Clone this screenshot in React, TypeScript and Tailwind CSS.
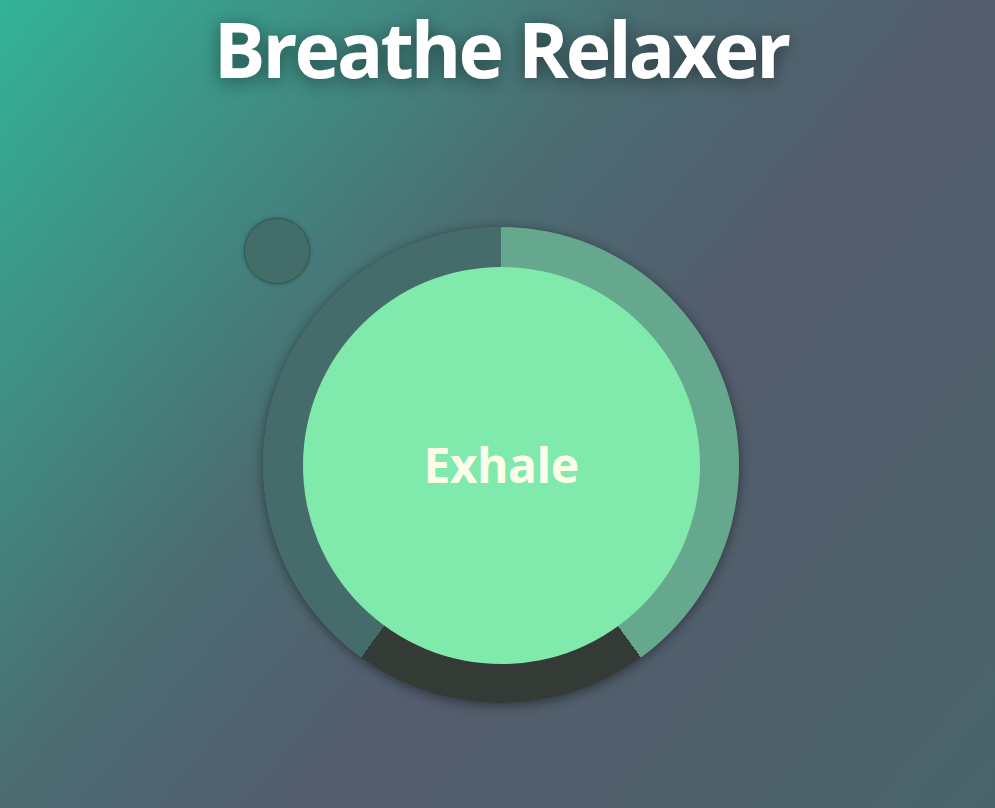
import React from 'react';

const App: React.FC = () => {
  return (
    <div className="min-h-screen w-full overflow-hidden bg-[linear-gradient(130deg,#32b398_0%,#4b6c72_40%,#545c6d_60%,#4a656a_100%)] font-['Open_Sans',sans-serif] text-white">
      <main className="flex flex-col items-center pl-[7px]">
        {/* Title */}
        <h1 className="pt-[4px] text-[77px] font-bold leading-[90px] tracking-[-3px] [text-shadow:0_3px_18px_rgba(0,0,0,0.45)]">
          Breathe Relaxer
        </h1>

        {/* Breathing circle */}
        <div className="relative mt-[133px] h-[476px] w-[476px]">
          <div className="flex h-full w-full items-center justify-center rounded-full bg-[conic-gradient(#66a88e_0%,#66a88e_40%,#343a36_40%,#343a36_60%,#456c6b_60%,#456c6b_100%)] shadow-[0_2px_12px_rgba(0,0,0,0.45)]">
            <div className="flex h-[397px] w-[397px] items-center justify-center rounded-full bg-[#80eaad]">
              <span className="text-[48px] font-bold leading-none tracking-[-0.5px] text-[#fdfdea]">Exhale</span>
            </div>
          </div>

          {/* Pointer */}
          <span className="absolute left-[-19px] top-[-9px] block h-[66px] w-[66px] rounded-full border border-[#335955] bg-[#436d69] shadow-[0_0_4px_rgba(0,0,0,0.3)]" />
        </div>
      </main>
    </div>
  );
};

export default App;
